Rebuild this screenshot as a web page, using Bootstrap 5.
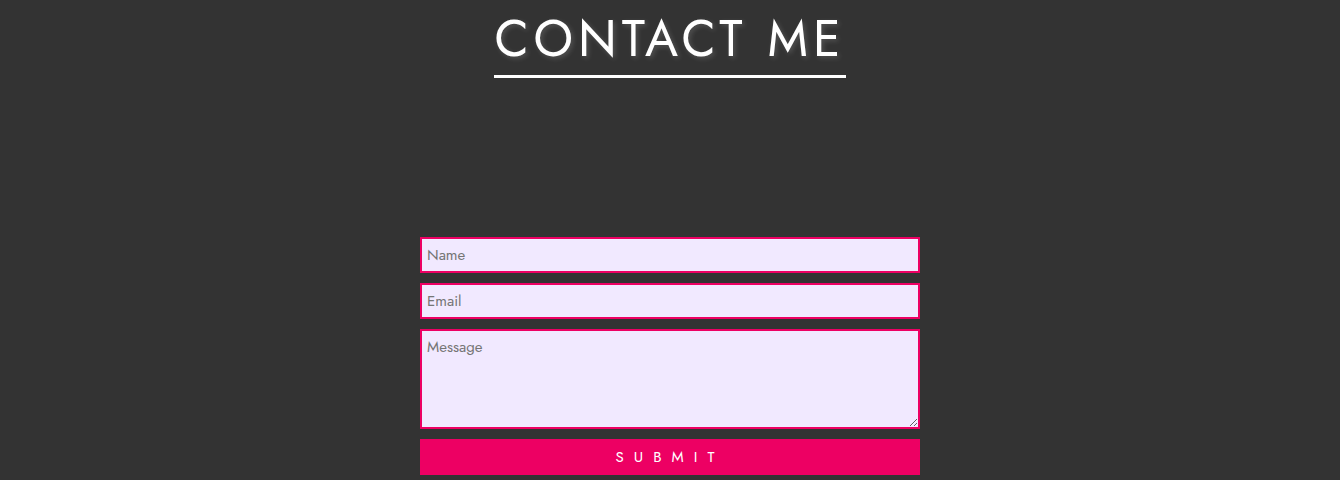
<!DOCTYPE html>
<html lang="en">
<head>
<meta charset="utf-8">
<meta name="viewport" content="width=device-width, initial-scale=1">
<title>Contact Me</title>
<link href="https://cdn.jsdelivr.net/npm/bootstrap@5.3.0/dist/css/bootstrap.min.css" rel="stylesheet">
<style>
body { background: #333; color: #fff; font-family: Jost, Lato, sans-serif; }
.contact-title { font-size: 50px; line-height: 72px; padding-top: 3px; font-weight: 400; letter-spacing: 5px; border-bottom: 3px solid #fff; text-shadow: 2px 2px 5px rgba(255, 255, 255, .17); }
.contact-form { max-width: 500px; margin-top: 159px; gap: 10px; }
.contact-form .form-control { background: #f1e9ff; border: 2px solid #ed0063; padding: 0 5px; font-size: 15px; line-height: 32px; color: #333; }
.contact-form .form-control::placeholder { color: #757575; }
.contact-form textarea.form-control { height: 100px; min-height: 100px; padding: 5px; line-height: 22px; }
.contact-submit { background: #ed0063; color: #fff; font-size: 15px; font-weight: 400; line-height: 36px; letter-spacing: 10px; }
.contact-submit:hover { background: #c90054; color: #fff; }
</style>
</head>
<body>
<main class="d-flex flex-column align-items-center">
  <h1 class="contact-title text-uppercase mb-0">Contact Me</h1>
  <form class="contact-form d-flex flex-column w-100">
    <input class="form-control rounded-0" type="text" placeholder="Name" aria-label="Name">
    <input class="form-control rounded-0" type="email" placeholder="Email" aria-label="Email">
    <textarea class="form-control rounded-0" placeholder="Message" aria-label="Message"></textarea>
    <button class="contact-submit btn border-0 rounded-0 p-0 text-uppercase" type="submit">Submit</button>
  </form>
</main>
<script src="https://cdn.jsdelivr.net/npm/bootstrap@5.3.0/dist/js/bootstrap.bundle.min.js"></script>
</body>
</html>
